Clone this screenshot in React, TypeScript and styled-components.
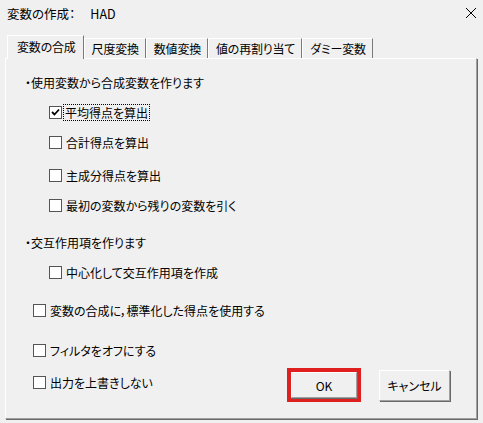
import React from "react";
import styled, { createGlobalStyle } from "styled-components";

const Global = createGlobalStyle`
  html, body { margin: 0; padding: 0; background: #f0f0f0; }
  body {
    font-family: "Noto Sans CJK JP", "Noto Sans", sans-serif;
    color: #000;
    font-feature-settings: "palt";
  }
`;

const Dialog = styled.div`
  width: 483px;
  height: 423px;
  display: flex;
  flex-direction: column;
  background: #f0f0f0;
  box-sizing: border-box;
  font-size: 12px;
`;

const TitleBar = styled.div`
  height: 28px;
  display: flex;
  align-items: center;
  justify-content: space-between;
  padding: 0 6px 2px 7px;
  box-sizing: border-box;
  font-size: 12.5px;
`;

const TitleText = styled.span`
  white-space: pre;
`;

const TitleGap = styled.span`
  display: inline-block;
  width: 15px;
`;

const TabStrip = styled.div`
  display: flex;
  align-items: flex-end;
  padding-left: 7px;
  height: 30px;
  box-sizing: border-box;
`;

const Tab = styled.div<{ $active?: boolean }>`
  height: ${(p) => (p.$active ? 24 : 20)}px;
  padding: ${(p) => (p.$active ? "3px 7px 0 9px" : "0 6px 0 7px")};
  display: flex;
  align-items: ${(p) => (p.$active ? "flex-start" : "center")};
  box-sizing: border-box;
  border-top: 1px solid #ffffff;
  border-left: 1px solid #ffffff;
  border-right: 1px solid #7a7a7a;
  margin-bottom: ${(p) => (p.$active ? -1 : 0)}px;
  background: #f0f0f0;
  position: relative;
  z-index: ${(p) => (p.$active ? 2 : 1)};
  white-space: nowrap;
  font-size: 12px;
  letter-spacing: -0.2px;
  line-height: 16px;
`;

const Panel = styled.div`
  flex: 1;
  margin: 0 6px 4px 5px;
  border-top: 1px solid #ffffff;
  border-left: 1px solid #ffffff;
  border-right: 1px solid #a0a0a0;
  border-bottom: 1px solid #a0a0a0;
  box-shadow: 1px 1px 0 #696969;
  display: flex;
  flex-direction: column;
  box-sizing: border-box;
  padding: 16px 0 0 0;
`;

const Heading = styled.div<{ $top: number }>`
  margin-top: ${(p) => p.$top}px;
  padding-left: 19px;
  height: 16px;
  line-height: 16px;
  white-space: nowrap;
`;

const CheckRow = styled.label<{ $top: number; $indent: number }>`
  margin-top: ${(p) => p.$top}px;
  padding-left: ${(p) => p.$indent}px;
  height: 16px;
  display: flex;
  align-items: center;
  white-space: nowrap;
  line-height: 16px;
`;

const Box = styled.span`
  width: 13px;
  height: 13px;
  box-sizing: border-box;
  border: 1px solid #555555;
  background: #ffffff;
  display: inline-flex;
  align-items: center;
  justify-content: center;
  flex-shrink: 0;
`;

const Label = styled.span<{ $focus?: boolean }>`
  margin-left: ${(p) => (p.$focus ? 2 : 4)}px;
  padding: ${(p) => (p.$focus ? "0 1px" : "0")};
  outline: ${(p) => (p.$focus ? "1px dotted #000" : "none")};
  outline-offset: 0;
  line-height: 15px;
`;

const Footer = styled.div`
  margin-top: 10px;
  display: flex;
  align-items: center;
  justify-content: space-between;
  padding-right: 26px;
`;

const FooterCheck = styled(CheckRow)`
  margin-bottom: 6px;
`;

const Buttons = styled.div`
  display: flex;
  align-items: center;
  gap: 18px;
`;

const Highlight = styled.div`
  width: 74px;
  height: 34px;
  box-sizing: border-box;
  border: 4px solid #e0201e;
  display: flex;
`;

const Button = styled.button<{ $w?: number; $h?: number }>`
  width: ${(p) => (p.$w ? `${p.$w}px` : "100%")};
  height: ${(p) => (p.$h ? `${p.$h}px` : "100%")};
  font-family: inherit;
  font-feature-settings: "palt";
  font-size: 12px;
  color: #000;
  background: #f0f0f0;
  box-sizing: border-box;
  border-top: 1px solid #ffffff;
  border-left: 1px solid #ffffff;
  border-right: 1px solid #a0a0a0;
  border-bottom: 1px solid #a0a0a0;
  box-shadow: 1px 1px 0 #696969;
  padding: 0;
  display: flex;
  align-items: center;
  justify-content: center;
`;

const Close = () => (
  <svg width="12" height="12" viewBox="0 0 12 12">
    <path d="M1 1 L11 11 M11 1 L1 11" stroke="#000" strokeWidth="1" fill="none" />
  </svg>
);

const Check = () => (
  <svg width="9" height="9" viewBox="0 0 9 9">
    <path d="M1 4 L3.5 6.5 L8 1.5" stroke="#000" strokeWidth="1.8" fill="none" />
  </svg>
);

const CB = ({ checked, focus, text, top, indent }: { checked?: boolean; focus?: boolean; text: string; top: number; indent: number }) => (
  <CheckRow $top={top} $indent={indent}>
    <Box>{checked && <Check />}</Box>
    <Label $focus={focus}>{text}</Label>
  </CheckRow>
);

export default function App() {
  return (
    <>
      <Global />
      <Dialog>
        <TitleBar>
          <TitleText>
            変数の作成：<TitleGap />HAD
          </TitleText>
          <Close />
        </TitleBar>
        <TabStrip>
          <Tab $active>変数の合成</Tab>
          <Tab>尺度変換</Tab>
          <Tab>数値変換</Tab>
          <Tab>値の再割り当て</Tab>
          <Tab>ダミー変数</Tab>
        </TabStrip>
        <Panel>
          <Heading $top={0}>・使用変数から合成変数を作ります</Heading>
          <CB top={13} indent={43} checked focus text="平均得点を算出" />
          <CB top={14} indent={43} text="合計得点を算出" />
          <CB top={17} indent={43} text="主成分得点を算出" />
          <CB top={14} indent={43} text="最初の変数から残りの変数を引く" />
          <Heading $top={22}>・交互作用項を作ります</Heading>
          <CB top={13} indent={43} text="中心化して交互作用項を作成" />
          <CB top={22} indent={27} text="変数の合成に，標準化した得点を使用する" />
          <CB top={24} indent={27} text="フィルタをオフにする" />
          <Footer>
            <FooterCheck $top={0} $indent={27}>
              <Box />
              <Label>出力を上書きしない</Label>
            </FooterCheck>
            <Buttons>
              <Highlight>
                <Button>OK</Button>
              </Highlight>
              <Button $w={71} $h={31}>キャンセル</Button>
            </Buttons>
          </Footer>
        </Panel>
      </Dialog>
    </>
  );
}
